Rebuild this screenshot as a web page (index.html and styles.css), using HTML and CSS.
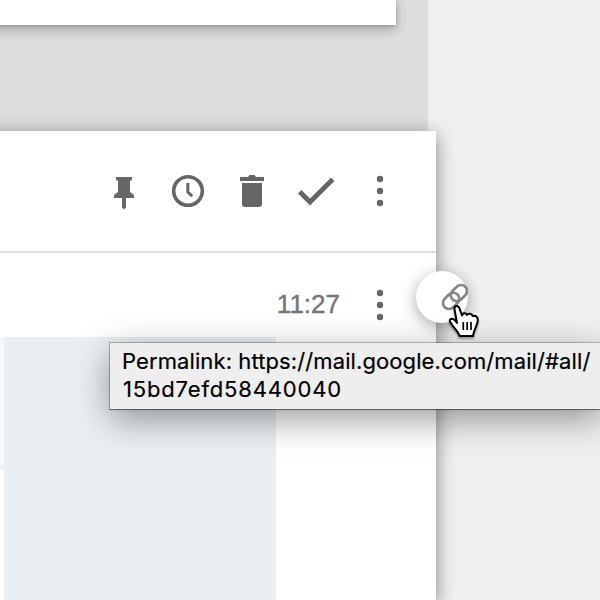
FILE: index.html
```html
<!DOCTYPE html>
<html lang="en">
<head>
<meta charset="utf-8">
<title>Mail</title>
<link rel="stylesheet" href="styles.css">
</head>
<body>
<main class="list">
  <section class="card card-previous"></section>
  <article class="card message">
    <header class="toolbar">
      <svg class="icon" viewBox="0 0 40 40"><path d="M12 6h16v3l-2 1v11l4 3v3h-8v9.500l-2 2-2-2V27h-8v-3l4-3V10l-2-1z"/></svg>
      <svg class="icon" viewBox="0 0 40 40"><g class="line"><circle cx="20" cy="20" r="14.300"/><path class="hands" d="M19.800 12v9l4.400 4.200"/></g></svg>
      <svg class="icon" viewBox="0 0 40 40"><path d="M8 6h8l1.500-2h5L24 6h8v4H8zM10 12h20v21q0 3-3 3H13q-3 0-3-3z"/></svg>
      <svg class="icon" viewBox="0 0 40 40"><path d="M5.500 19l-3.500 3.500L14 34.500 38.500 10 35 6.500 14 27.500z"/></svg>
      <svg class="icon" viewBox="0 0 40 40"><circle cx="20" cy="8" r="3.200"/><circle cx="20" cy="20" r="3.200"/><circle cx="20" cy="32" r="3.200"/></svg>
    </header>
    <div class="meta">
      <time class="time">11:27</time>
      <svg class="icon" viewBox="0 0 40 40"><circle cx="20" cy="8" r="3.200"/><circle cx="20" cy="20" r="3.200"/><circle cx="20" cy="32" r="3.200"/></svg>
    </div>
    <div class="content">
      <div class="edge"></div>
      <div class="panel"></div>
    </div>
    <a class="permalink">
      <svg class="chain" viewBox="0 0 52 52"><g transform="rotate(-45 39 26)"><rect x="24.500" y="20" width="18" height="12" rx="6"/><rect x="35.500" y="20" width="18" height="12" rx="6"/></g></svg>
    </a>
  </article>
</main>
<div class="tooltip">Permalink: https://mail.google.com/mail/#all/<br><span class="hash">15bd7efd58440040</span></div>
<svg class="cursor" viewBox="0 0 36 38">
  <path class="hand" d="M9 19L6.500 5.500C6 1.500 10 .500 11.500 4.500L14 11.500C14.500 8.500 18 8.500 19 11 20.500 9 24 9.500 24.500 12 27 11 30 12.500 29.800 16 29.800 21.500 26 24.500 25 32H11.500C10.500 27.500 6 24.500 2.500 18.500 0 15 4.500 13 7.500 17z"/>
  <path class="fingers" d="M15.300 18v8M19.200 18v8M23 18v8"/>
</svg>
</body>
</html>
```
FILE: styles.css
```css
* { box-sizing: border-box; }
body {
  margin: 0;
  width: 600px;
  height: 600px;
  overflow: hidden;
  position: relative;
  background: #f0f0f0;
}
.list {
  width: 428px;
  height: 600px;
  background: #ddd;
}
.card {
  margin-left: -40px;
  padding-left: 40px;
  background: #fff;
  box-shadow: 0 4px 12px rgba(0, 0, 0, .3), 0 0 3px rgba(0, 0, 0, .2);
}
.card-previous {
  width: 436px;
  height: 25px;
  margin-bottom: 106px;
}
.message {
  width: 476px;
  height: 469px;
  position: relative;
  box-shadow: 0 4px 18px rgba(0, 0, 0, .42), 0 20px 18px rgba(0, 0, 0, .05);
}
.toolbar {
  height: 122px;
  margin-left: -40px;
  border-bottom: 2px solid #dfdfdf;
  padding-right: 36px;
  display: flex;
  justify-content: flex-end;
  align-items: center;
  gap: 24px;
}
.icon {
  width: 40px;
  height: 40px;
  fill: #666;
}
.line {
  fill: none;
  stroke: #666;
  stroke-width: 3.600;
}
.hands { stroke-width: 3; }
.meta {
  height: 84px;
  padding: 20px 36px 0 0;
  display: flex;
  justify-content: flex-end;
  align-items: center;
  gap: 20px;
}
.time {
  font: 26px/38px "Liberation Sans", Arial, sans-serif;
  padding-bottom: 2px;
  color: #757575;
  -webkit-text-stroke: .4px #757575;
}
.content {
  display: flex;
  height: 263px;
}
.edge {
  width: 4px;
  height: 132px;
  background: #f6f8fa;
  border-bottom: 2px solid #ebeef0;
}
.panel {
  width: 272px;
  background: #ebeff2;
}
.permalink {
  position: absolute;
  right: -32px;
  top: 140px;
  width: 52px;
  height: 52px;
  border-radius: 50%;
  background: #fff;
  box-shadow: 0 4px 16px rgba(0, 0, 0, .35);
}
.chain {
  display: block;
  width: 52px;
  height: 52px;
  fill: none;
  stroke: #858585;
  stroke-width: 2.600;
}
.tooltip {
  position: absolute;
  left: 110px;
  top: 343px;
  width: 494px;
  height: 66px;
  padding: 4px 0 0 12px;
  background: #eee;
  color: #000;
  font: 22px/28px Inter, "Liberation Sans", sans-serif;
  letter-spacing: .1px;
  -webkit-text-stroke: .2px #000;
  white-space: nowrap;
  box-shadow: 0 0 0 1px rgba(0, 0, 0, .25), 0 1px 1px rgba(0, 0, 0, .3), 0 10px 36px rgba(0, 0, 0, .4);
}
.hash {
  padding-left: 1px;
  letter-spacing: .83px;
}
.cursor {
  position: absolute;
  left: 448px;
  top: 304px;
  width: 36px;
  height: 38px;
  overflow: visible;
  filter: drop-shadow(0 2px 1px rgba(0, 0, 0, .35));
}
.hand {
  fill: #fff;
  stroke: #000;
  stroke-width: 2;
  stroke-linejoin: round;
}
.fingers {
  fill: none;
  stroke: #000;
  stroke-width: 1.700;
}
```
